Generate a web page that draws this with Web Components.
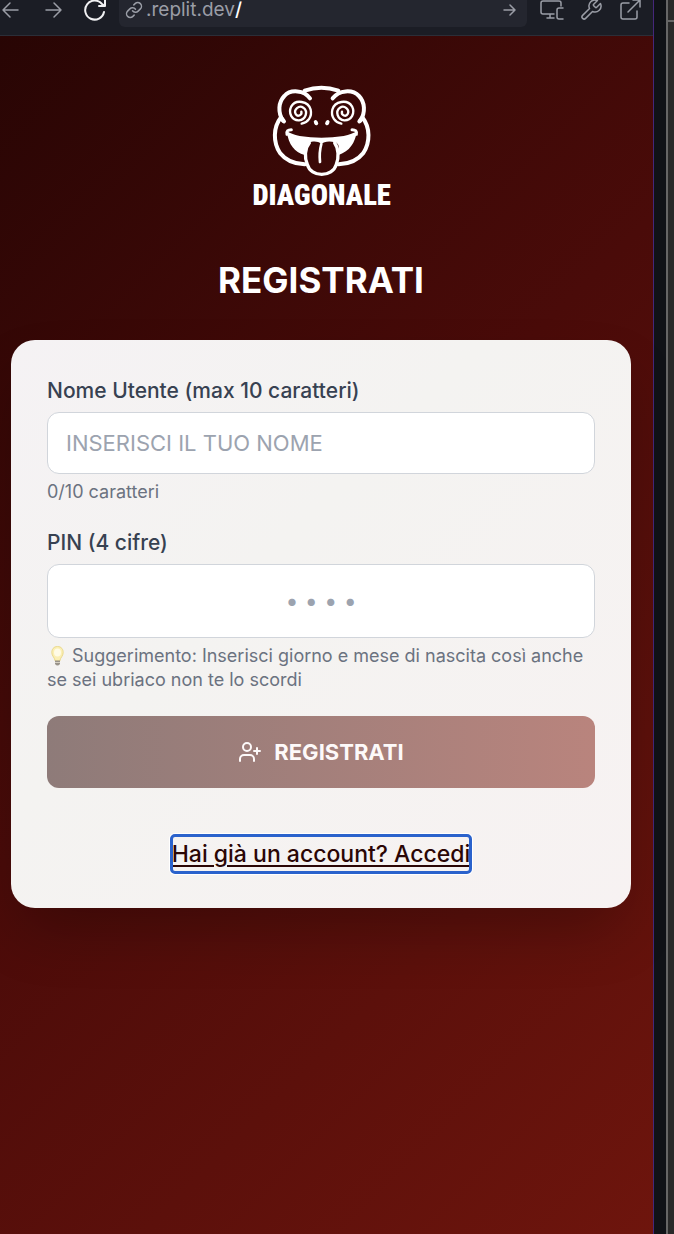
<!DOCTYPE html>
<html lang="it">
<head>
<meta charset="utf-8">
<meta name="viewport" content="width=device-width, initial-scale=1">
<title>Diagonale – Registrati</title>
<style>
  html, body { margin: 0; height: 100%; }
  body { font-family: Inter, "Liberation Sans", sans-serif; background: #101217; }
</style>
</head>
<body>
<preview-window>
  <browser-bar slot="bar" host=".replit.dev"></browser-bar>
  <register-page>
    <brand-logo slot="logo"></brand-logo>
    <register-card>
      <form-field label="Nome Utente (max 10 caratteri)" name="username" placeholder="INSERISCI IL TUO NOME" maxlength="10">0/10 caratteri</form-field>
      <form-field kind="pin" label="PIN (4 cifre)" name="pin" placeholder="• • • •" maxlength="4"><bulb-icon></bulb-icon> Suggerimento: Inserisci giorno e mese di nascita così anche se sei ubriaco non te lo scordi</form-field>
      <submit-button>REGISTRATI</submit-button>
      <login-link>Hai già un account? Accedi</login-link>
    </register-card>
  </register-page>
</preview-window>

<script>
const define = (name, html, setup) => {
  const template = document.createElement('template');
  template.innerHTML = html;
  customElements.define(name, class extends HTMLElement {
    constructor() {
      super();
      this.attachShadow({ mode: 'open' }).append(template.content.cloneNode(true));
    }
    connectedCallback() { if (setup) setup(this, this.shadowRoot); }
  });
};

define('preview-window', `
<style>
  :host { display: flex; min-height: 100vh; background: #101217; }
  .view { flex: 1; min-width: 0; display: flex; flex-direction: column; border-right: 1px solid #45277a; }
  .gutter { width: 12px; }
  .side { width: 6px; border-left: 2px solid #666; background: #292929; }
  .side div { height: 20px; border-bottom: 2px solid #666; }
</style>
<div class="view"><slot name="bar"></slot><slot></slot></div>
<div class="gutter"></div>
<div class="side"><div></div></div>`);

define('browser-bar', `
<style>
  :host { display: block; overflow: hidden; background: #1b1d25; border-bottom: 1px solid #2b2e38; padding-bottom: 8px; }
  /* the bar is scrolled up, so only its lower part shows */
  nav { display: flex; align-items: center; height: 35px; margin-top: -8px; }
  button { all: unset; display: flex; justify-content: center; width: 42px; color: #9a9da6; }
  button.on { color: #f0f0f2; }
  button.on svg { stroke-width: 2; }
  button.back { width: 32px; justify-content: flex-start; }
  .tools button { width: 39px; }
  .tools { display: flex; padding: 0 4px 0 5px; color: #a8abb3; }
  svg { fill: none; stroke: currentColor; stroke-width: 1.5; stroke-linecap: round; stroke-linejoin: round; display: block; }
  .address { flex: 1; min-width: 0; margin-left: 3px; display: flex; align-items: center; height: 35px; border-radius: 6px; background: #24262f; color: #9a9da6; padding: 0 11px 0 6px; box-sizing: border-box; }
  .address svg:first-child { stroke-width: 2; }
  .url { flex: 1; margin-left: 3px; font-size: 19px; line-height: 20px; }
  b { font-weight: 500; color: #fff; }
</style>
<nav>
  <button class="back" aria-label="Indietro"><svg width="20" height="20" viewBox="0 0 20 20"><path d="M18 10H3M10 3l-7 7 7 7"/></svg></button>
  <button aria-label="Avanti"><svg width="20" height="20" viewBox="0 0 20 20"><path d="M3 10h15M11 3l7 7-7 7"/></svg></button>
  <button class="on" aria-label="Ricarica"><svg width="24" height="24" viewBox="0 0 24 24"><path d="M21 14a9.500 9.500 0 1 1-2-8l3 2M22 2v6h-6"/></svg></button>
  <div class="address">
    <svg width="18" height="18" viewBox="0 0 24 24"><path d="M10 13a5 5 0 0 0 7.540.540l3-3a5 5 0 0 0-7.070-7.070l-1.720 1.710M14 11a5 5 0 0 0-7.540-.540l-3 3a5 5 0 0 0 7.070 7.070l1.710-1.710"/></svg>
    <span class="url"><span id="host"></span><b>/</b></span>
    <svg width="14" height="14" viewBox="0 0 14 14"><path d="M2 7h11M8 2l5 5-5 5"/></svg>
  </div>
  <div class="tools">
    <button aria-label="Dispositivi"><svg width="26" height="24" viewBox="0 0 26 24"><path d="M22 8V5a2 2 0 0 0-2-2H4a2 2 0 0 0-2 2v9a2 2 0 0 0 2 2h11M8 20h7M11 16v4M24 10h-4a2 2 0 0 0-2 2v7a2 2 0 0 0 2 2h4"/></svg></button>
    <button aria-label="Strumenti"><svg width="24" height="24" viewBox="0 0 24 24"><path d="M14.700 6.300a1 1 0 0 0 0 1.400l1.600 1.600a1 1 0 0 0 1.400 0l3.770-3.770a6 6 0 0 1-7.940 7.940l-6.910 6.910a2.120 2.120 0 0 1-3-3l6.910-6.910a6 6 0 0 1 7.940-7.940z"/></svg></button>
    <button aria-label="Apri in una nuova scheda"><svg width="24" height="24" viewBox="0 0 24 24"><path d="M19 13v6a2 2 0 0 1-2 2H5a2 2 0 0 1-2-2V7a2 2 0 0 1 2-2h6M15 2h7v7M10 14 22 2"/></svg></button>
  </div>
</nav>`, (el, root) => { root.getElementById('host').textContent = el.getAttribute('host'); });

define('register-page', `
<style>
  :host { flex: 1; display: block; background: linear-gradient(135deg, #280504 0%, #4a0b09 45%, #6e150d 100%); padding: 39px 22px 40px 11px; }
  header { display: flex; flex-direction: column; align-items: center; }
  h1 { margin: 38px 0 33px; font-size: 35px; line-height: 54px; font-weight: 700; color: #fff; }
</style>
<header><slot name="logo"></slot><h1>REGISTRATI</h1></header>
<main><slot></slot></main>`);

define('brand-logo', `
<style>
  :host { display: block; }
  svg { display: block; }
  .line { fill: none; stroke: #fff; stroke-linecap: round; stroke-linejoin: round; }
  text { font: 900 86px "Liberation Sans Narrow", "Roboto Condensed", "Liberation Sans", sans-serif; fill: #fff; }
</style>
<svg width="160" height="140" viewBox="0 0 480 420" role="img" aria-label="Diagonale">
  <g class="line" stroke-width="12">
    <path d="M191 47Q241 29 292 47"/>
    <path d="M207 70C190 45 148 42 130 63C112 82 110 112 126 137"/>
    <path d="M275 70C294 45 334 42 354 63C372 82 374 112 358 137"/>
    <path d="M129 139L120 127C96 158 96 201 117 234C134 256 162 267 191 268"/>
    <path d="M355 139L364 127C388 158 388 201 367 234C350 256 322 267 293 268"/>
    <path d="M205 204C191 220 190 247 199 268C209 308 275 308 286 268C294 247 293 220 281 204" stroke-width="10"/>
  </g>
  <path fill="#fff" d="M137 169Q150 177 176 183Q241 194 308 183Q334 177 348 169C342 204 326 229 293 240C296 219 294 205 282 202C264 197 248 200 241 207C230 198 215 198 204 204C194 211 191 222 191 240C160 232 143 209 137 169Z"/>
  <g class="line" stroke-width="8">
    <path d="M138 178Q135 164 151 164M346 178Q349 164 333 164" stroke-width="9"/>
    <path d="M241 207Q234 232 237 261"/>
    <path d="M182 146C201 142 214 125 209 104C202 78 164 72 151 94C140 116 154 137 174 136C195 134 202 109 187 98C174 89 157 104 164 117C169 127 184 121 181 110" stroke-width="7"/>
    <path d="M301 146C282 142 269 125 274 104C281 78 319 72 333 94C344 116 330 137 310 136C289 134 282 109 297 98C310 89 327 104 320 117C315 127 300 121 303 110" stroke-width="7"/>
  </g>
  <ellipse cx="225" cy="143" rx="6" ry="8" transform="rotate(-30 225 143)" fill="#fff"/>
  <ellipse cx="259" cy="143" rx="6" ry="8" transform="rotate(30 259 143)" fill="#fff"/>
  <text x="242" y="389" text-anchor="middle">DIAGONALE</text>
</svg>`);

define('register-card', `
<style>
  :host { display: flex; flex-direction: column; gap: 24px; padding: 36px; border-radius: 24px;
    background: linear-gradient(135deg, #f5f2f4 0%, #f4f3f1 40%, #f7f2f2 100%); box-shadow: 0 30px 60px -12px rgb(0 0 0 / .25); }
</style>
<slot></slot>`);

define('form-field', `
<style>
  :host { display: flex; flex-direction: column; gap: 6px; }
  label { font-size: 21px; line-height: 30px; font-weight: 500; color: #374151; }
  input { box-sizing: border-box; width: 100%; height: 62px; margin: 0; padding: 0 18px; border: 1px solid #d1d5db; border-radius: 12px;
    background: #fff; font: 400 22px Inter, sans-serif; color: #111827; outline: none; }
  :host([kind="pin"]) input { height: 74px; text-align: center; font-size: 23px; }
  input::placeholder { color: #9ca3af; opacity: 1; }
  p { margin: 0; font-size: 18px; line-height: 24px; color: #6b7280; }
</style>
<label for="field"></label>
<input id="field" type="text">
<p><slot></slot></p>`, (el, root) => {
  root.querySelector('label').textContent = el.getAttribute('label');
  const input = root.querySelector('input');
  for (const name of ['name', 'placeholder', 'maxlength']) input.setAttribute(name, el.getAttribute(name));
});

define('bulb-icon', `
<style>
  :host { display: inline-block; width: 20px; height: 20px; vertical-align: -4px; }
  svg { display: block; }
</style>
<svg width="20" height="20" viewBox="0 0 20 20" role="img" aria-label="Idea">
  <path d="M10.500 .5C6.500.500 4.800 3.500 4.800 6.500C4.800 10 7.700 11.500 8.200 15h4.600C13.300 11.500 16.200 10 16.200 6.500C16.200 3.500 14.500.500 10.500 .5Z" fill="#fbefb4" stroke="#ead98c"/>
  <ellipse cx="10.500" cy="6.500" rx="3.500" ry="4" fill="#fffbe6"/>
  <path d="M8 14.500h5v3.500q-2.500 3-5 0z" fill="#99938a"/>
  <path d="M8 16.500h5" stroke="#d5d0c4"/>
</svg>`);

define('submit-button', `
<style>
  :host { display: block; }
  button { display: flex; align-items: center; justify-content: center; gap: 12px; width: 100%; height: 72px; border: 0; border-radius: 12px;
    background: linear-gradient(90deg, #8e7b79, #b9847d); color: #fdf9f9; font: 700 22px Inter, sans-serif; }
  svg { fill: none; stroke: currentColor; stroke-width: 2; stroke-linecap: round; stroke-linejoin: round; }
</style>
<button type="submit">
  <svg width="24" height="24" viewBox="0 0 24 24"><path d="M16 21v-2a4 4 0 0 0-4-4H6a4 4 0 0 0-4 4v2M19 8v6M22 11h-6"/><circle cx="9" cy="7" r="4"/></svg>
  <slot></slot>
</button>`);

define('login-link', `
<style>
  :host { display: flex; justify-content: center; padding-top: 24px; }
  a { font-size: 23px; line-height: 36px; font-weight: 500; color: #2b0605; text-decoration: underline; text-underline-offset: 3px; text-decoration-thickness: 2px;
    border-radius: 3px; outline: 3px solid #2a62cc; outline-offset: -1px; box-shadow: 0 0 0 3px #fff; }
</style>
<a href="#accedi"><slot></slot></a>`);
</script>
</body>
</html>
